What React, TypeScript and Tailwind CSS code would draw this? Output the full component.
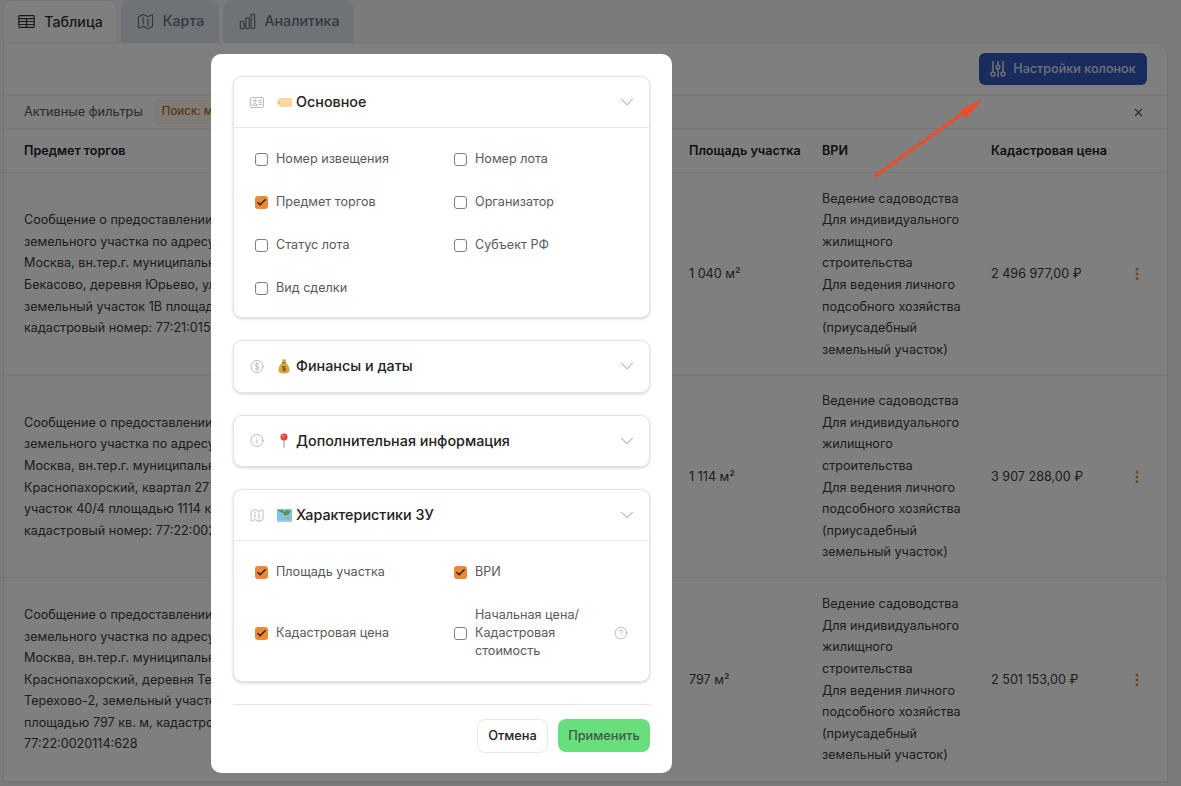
import { X, MoreVertical, Check, ChevronDown, CircleHelp } from "lucide-react";
import {
  HiOutlineTableCells,
  HiOutlineMap,
  HiOutlineChartBar,
  HiOutlineIdentification,
  HiOutlineCurrencyDollar,
  HiOutlineInformationCircle,
} from "react-icons/hi2";
import type { ReactNode } from "react";

const vriLines = [
  "Ведение садоводства",
  "Для индивидуального",
  "жилищного",
  "строительства",
  "Для ведения личного",
  "подсобного хозяйства",
  "(приусадебный",
  "земельный участок)",
];

const rows = [
  {
    subject: [
      "Сообщение о предоставлении",
      "земельного участка по адресу:",
      "Москва, вн.тер.г. муниципальный округ",
      "Бекасово, деревня Юрьево, улица",
      "земельный участок 1В площадью",
      "кадастровый номер: 77:21:015",
    ],
    area: "1 040 м²",
    price: "2 496 977,00 ₽",
    height: "h-[203px]",
  },
  {
    subject: [
      "Сообщение о предоставлении",
      "земельного участка по адресу:",
      "Москва, вн.тер.г. муниципальный округ",
      "Краснопахорский, квартал 277",
      "участок 40/4 площадью 1114 кв. м,",
      "кадастровый номер: 77:22:002",
    ],
    area: "1 114 м²",
    price: "3 907 288,00 ₽",
    height: "h-[202px]",
  },
  {
    subject: [
      "Сообщение о предоставлении",
      "земельного участка по адресу:",
      "Москва, вн.тер.г. муниципальный округ",
      "Краснопахорский, деревня Терехово",
      "Терехово-2, земельный участок",
      "площадью 797 кв. м, кадастровый номер:",
      "77:22:0020114:628",
    ],
    area: "797 м²",
    price: "2 501 153,00 ₽",
    height: "h-[204px]",
  },
];

const TagEmoji = () => (
  <svg width="15" height="9" viewBox="0 0 15 9">
    <path d="M3 0h12v9H3L0 6V3z" fill="#f8d7a0" />
    <circle cx="2.4" cy="4.5" r="0.7" fill="#c9a36a" />
  </svg>
);

const BagEmoji = () => (
  <svg width="12" height="15" viewBox="0 0 12 15">
    <path d="M3.6 0.5h4.8L7.3 3.6h-2.6z" fill="#d9a441" />
    <path d="M4.4 3.6h3.2C10 5.6 11.6 8.5 11.6 11c0 2.6-2.4 3.5-5.6 3.5S.4 13.6.4 11c0-2.5 1.6-5.4 4-7.4z" fill="#dba63f" />
    <rect x="4" y="3.2" width="4" height="1" fill="#8a6420" />
    <text x="6" y="12.4" textAnchor="middle" fontSize="7" fontWeight="700" fill="#6b4a12" fontFamily="Liberation Sans">$</text>
  </svg>
);

const PinEmoji = () => (
  <svg width="10" height="15" viewBox="0 0 10 15">
    <path d="M5 5v9.5" stroke="#9aa3ad" strokeWidth="1.2" />
    <circle cx="5" cy="4" r="3.6" fill="#e5453c" />
    <circle cx="3.9" cy="2.9" r="1" fill="#f7a6a0" />
  </svg>
);

const MapEmoji = () => (
  <svg width="15" height="13" viewBox="0 0 15 13">
    <rect width="15" height="13" fill="#7cc4e8" />
    <path d="M1 1h5l1 2 3-2 4 1-3 4-2 0-1 1-2-3-3-1z" fill="#5f8f4a" />
    <path d="M9 8h3l1 2-3 1z" fill="#c9a35e" />
    <rect y="11.5" width="15" height="1.5" fill="#9ad4ef" />
  </svg>
);

// three vertical sliders, the knobs drawn as small rings
const ColumnsIcon = () => (
  <svg width="16" height="18" viewBox="0 0 16 18" fill="none" stroke="currentColor" strokeWidth="1.5" strokeLinecap="round">
    <path d="M3 1.5v10M8 1.5v4M8 9v7.5M13 1.5v10" />
    <circle cx="3" cy="14" r="2" />
    <circle cx="8" cy="7" r="1.8" />
    <circle cx="13" cy="14" r="2" />
  </svg>
);

const Box = ({ label, checked, hint }: { label: ReactNode; checked?: boolean; hint?: boolean }) => (
  <div className="flex items-center">
    {checked ? (
      <span className="flex h-[13px] w-[13px] shrink-0 items-center justify-center rounded-[3px] bg-[#ed8936]">
        <Check size={11} strokeWidth={3.5} className="text-[#2b2b2b]" />
      </span>
    ) : (
      <span className="h-[13px] w-[13px] shrink-0 rounded-[3px] border border-[#808080] bg-white" />
    )}
    <span className="ml-2 flex-1 text-[12.6px] leading-[18px] text-[#565a60]">{label}</span>
    {hint && <CircleHelp size={14} strokeWidth={1.2} className="text-[#a3a3a3]" />}
  </div>
);

const Section = ({
  icon,
  emoji,
  title,
  open,
  children,
}: {
  icon: ReactNode;
  emoji: ReactNode;
  title: string;
  open?: boolean;
  children?: ReactNode;
}) => (
  <div className="rounded-[9px] border border-[#e6e6e6] bg-white shadow-[0_1px_3px_rgba(0,0,0,0.18)]">
    <div className={`flex items-center pl-[15px] pr-[11px] ${open ? "h-[51px] border-b border-[#e8e8e8]" : "h-[50.5px]"}`}>
      <span className="flex w-[16px] justify-center text-[#a3a3a3]">{icon}</span>
      <span className="ml-[11px] flex w-[16px] items-center justify-center">{emoji}</span>
      <span className="ml-[4px] flex-1 text-[14.35px] font-medium text-[#222]">{title}</span>
      <ChevronDown size={22} strokeWidth={1} className="text-[#8f8f8f]" />
    </div>
    {children}
  </div>
);

export default function App() {
  return (
    <div className="relative h-[786px] w-full overflow-hidden bg-[#f7f7f7] font-['Inter','Noto_Sans',sans-serif]">
      {/* Tabs */}
      <div className="flex h-[42px] gap-1 pl-[3px]">
        <div className="flex w-[114px] items-center justify-center gap-[8px] rounded-t-[9px] border border-b-0 border-[#ececec] bg-white text-[14.2px] font-medium text-[#333]">
          <HiOutlineTableCells size={19} />
          Таблица
        </div>
        <div className="flex w-[98px] items-center justify-center gap-[8px] rounded-t-[9px] bg-[#dfe6ee] text-[14.2px] font-medium text-[#6b7280]">
          <HiOutlineMap size={19} />
          Карта
        </div>
        <div className="flex w-[131px] items-center justify-center gap-[8px] rounded-t-[9px] bg-[#dfe6ee] text-[14.2px] font-medium text-[#6b7280]">
          <HiOutlineChartBar size={19} />
          Аналитика
        </div>
      </div>

      {/* Card */}
      <div className="ml-[3px] mr-[13px] rounded-tr-[12px] border border-[#e8e8e8] bg-white">
        <div className="flex h-[53px] items-center justify-end border-b border-[#e8e8e8] pr-[20px]">
          <button className="flex h-[32px] w-[168px] items-center justify-center gap-[7px] rounded-[6px] bg-[#3456bc] text-[12.6px] font-medium text-[#dde1ea]">
            <ColumnsIcon />
            Настройки колонок
          </button>
        </div>
        <div className="flex h-[33px] items-center border-b border-[#e8e8e8] pl-[20px] pr-[22px]">
          <span className="text-[12.8px] text-[#555]">Активные фильтры</span>
          <span className="ml-[11px] rounded-[5px] border border-[#fdeed8] bg-[#fff7ed] px-[7px] py-[2px] text-[11.5px] font-medium text-[#c2691c]">
            Поиск: москва
          </span>
          <X size={13} className="ml-auto text-[#555]" />
        </div>
        <div className="grid h-[44px] grid-cols-[665px_133px_169px_1fr] items-center border-b border-[#e8e8e8] pl-[20px] pt-[1px] text-[12.6px] font-semibold text-[#222]">
          <span>Предмет торгов</span>
          <span>Площадь участка</span>
          <span>ВРИ</span>
          <span>Кадастровая цена</span>
        </div>
        {rows.map((row) => (
          <div
            key={row.price}
            className={`grid grid-cols-[665px_133px_169px_1fr] items-center border-b border-[#e8e8e8] pl-[20px] text-[12.6px] leading-[21.6px] text-[#3a3a3a] ${row.height}`}
          >
            <div>
              {row.subject.map((line) => (
                <div key={line}>{line}</div>
              ))}
            </div>
            <span>{row.area}</span>
            <div>
              {vriLines.map((line) => (
                <div key={line}>{line}</div>
              ))}
            </div>
            <div className="flex items-center justify-between pr-[22px]">
              <span>{row.price}</span>
              <MoreVertical size={16} strokeWidth={2.4} className="text-[#ed8936]" />
            </div>
          </div>
        ))}
      </div>

      {/* Dim layer */}
      <div className="absolute inset-0 bg-black/50" />

      {/* Modal */}
      <div className="absolute left-[211px] top-[54px] flex h-[719px] w-[461px] flex-col rounded-[10px] bg-white px-[22px] pt-[22px]">
        <div className="flex flex-col gap-[22px]">
          <Section
            open
            icon={<HiOutlineIdentification size={21} strokeWidth={1.1} />}
            emoji={<TagEmoji />}
            title="Основное"
          >
            <div className="grid grid-cols-2 gap-x-[25px] gap-y-[25px] px-[21px] pb-[20px] pt-[22px]">
              <Box label="Номер извещения" />
              <Box label="Номер лота" />
              <Box label="Предмет торгов" checked />
              <Box label="Организатор" />
              <Box label="Статус лота" />
              <Box label="Субъект РФ" />
              <Box label="Вид сделки" />
            </div>
          </Section>
          <Section
            icon={<HiOutlineCurrencyDollar size={21} strokeWidth={1.1} />}
            emoji={<BagEmoji />}
            title="Финансы и даты"
          />
          <Section
            icon={<HiOutlineInformationCircle size={21} strokeWidth={1.1} />}
            emoji={<PinEmoji />}
            title="Дополнительная информация"
          />
          <Section
            open
            icon={<HiOutlineMap size={21} strokeWidth={1.1} />}
            emoji={<MapEmoji />}
            title="Характеристики ЗУ"
          >
            <div className="grid grid-cols-2 gap-x-[25px] gap-y-[25px] px-[21px] pb-[21px] pt-[22px]">
              <Box label="Площадь участка" checked />
              <Box label="ВРИ" checked />
              <Box label="Кадастровая цена" checked />
              <Box
                hint
                label={
                  <>
                    Начальная цена/
                    <br />
                    Кадастровая
                    <br />
                    стоимость
                  </>
                }
              />
            </div>
          </Section>
        </div>
        <div className="mt-[22px] flex justify-end gap-[10px] border-t border-[#e6e6e6] pt-[14px]">
          <button className="h-[34px] w-[71px] rounded-[8px] border border-[#e8e8e8] bg-white text-[12.8px] font-medium text-[#222]">
            Отмена
          </button>
          <button className="h-[33px] w-[92px] rounded-[8px] bg-[#68de7c] text-[12.8px] font-medium text-[#3f5a45]">
            Применить
          </button>
        </div>
      </div>

      {/* Annotation arrow */}
      <svg className="absolute left-[870px] top-[95px]" width="115" height="85" viewBox="0 0 115 85">
        <path d="M5 81L93 18" stroke="#ee4b2b" strokeWidth="3" strokeLinecap="round" />
        <path d="M113 4L90 15L96 23z" fill="#ee4b2b" />
      </svg>
    </div>
  );
}
